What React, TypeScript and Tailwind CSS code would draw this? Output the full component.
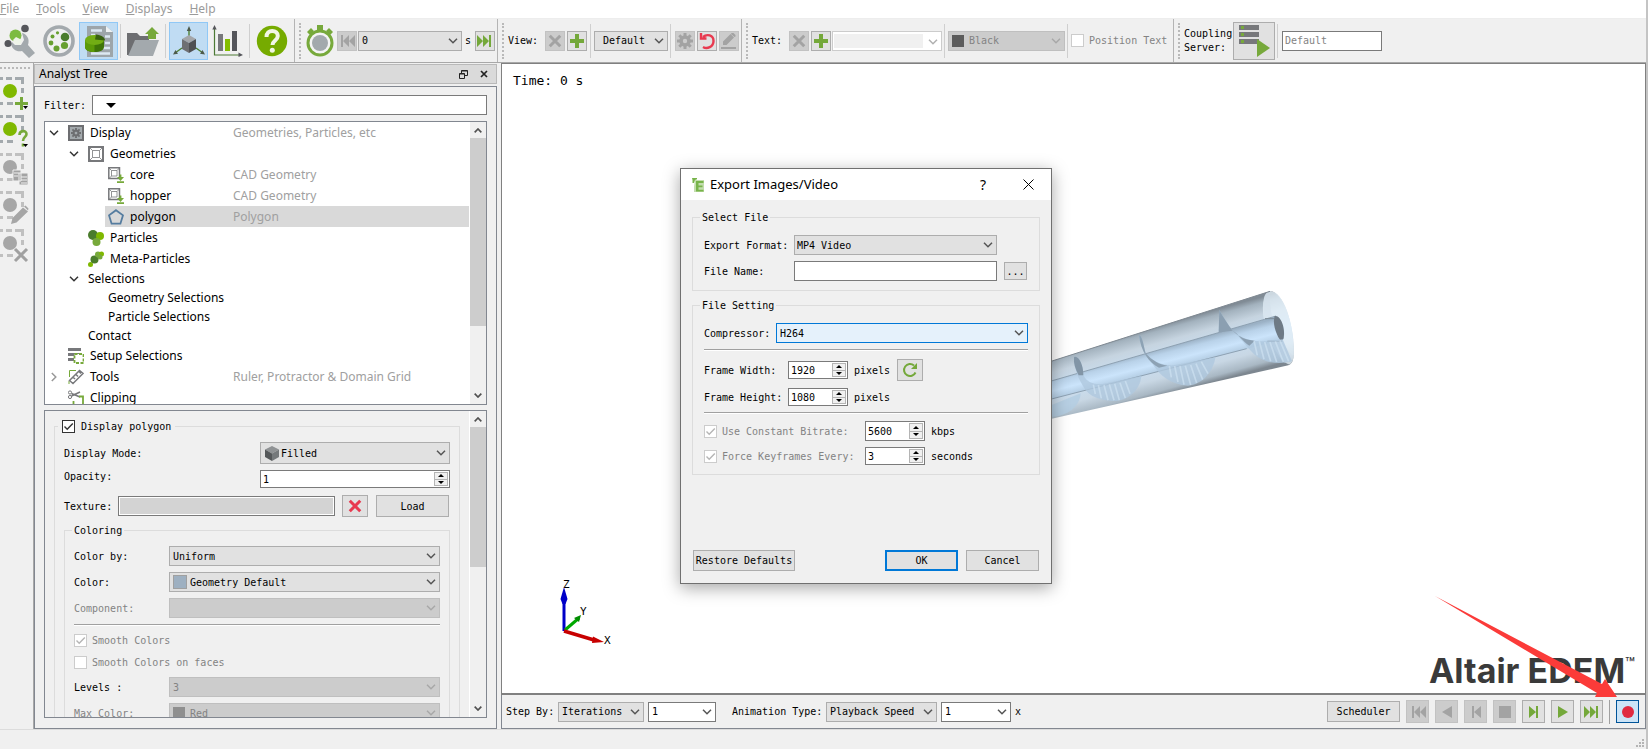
import type { ReactNode } from 'react';
import clsx from 'clsx';

/* ---------- small controls ---------- */

function Chevron({ className = '' }: { className?: string }) {
  return (
    <svg viewBox="0 0 10 6" className={clsx('h-1.5 w-2.5 fill-none stroke-current', className)} strokeWidth="1.5">
      <path d="M1 0.8 5 4.8 9 0.8" />
    </svg>
  );
}

type SelectProps = {
  label: string;
  value: string;
  className?: string;
  tone?: 'grey' | 'white' | 'active';
  disabled?: boolean;
  icon?: ReactNode;
};

function Select({ label, value, className, tone = 'grey', disabled, icon }: SelectProps) {
  return (
    <div className={clsx('relative h-5', className)}>
      <select
        aria-label={label}
        disabled={disabled}
        defaultValue={value}
        className={clsx(
          'block h-full w-full appearance-none border pr-4 outline-none disabled:opacity-100',
          icon ? 'pl-5' : 'pl-[3px]',
          disabled && 'border-[#bfbfbf] bg-[#cccccc] text-[#838383]',
          !disabled && tone === 'grey' && 'border-[#adadad] bg-[#e1e1e1]',
          !disabled && tone === 'white' && 'border-[#7a7a7a] bg-white',
          !disabled && tone === 'active' && 'border-[#0078d7] bg-[#e5f1fb]',
        )}
      >
        <option>{value}</option>
      </select>
      {icon && <span className="pointer-events-none absolute top-1/2 left-1 -translate-y-1/2">{icon}</span>}
      <Chevron
        className={clsx('pointer-events-none absolute top-1/2 right-1 -translate-y-1/2', disabled ? 'text-[#a8a8a8]' : 'text-[#555]')}
      />
    </div>
  );
}

function Spin({ id, value, className }: { id: string; value: string; className?: string }) {
  return (
    <div className={clsx('flex border border-[#7a7a7a] bg-white p-px', className)}>
      <input id={id} defaultValue={value} inputMode="numeric" className="w-0 flex-1 pl-px outline-none" />
      <div className="flex w-3.5 flex-col">
        <button aria-label="Increase" className="flex flex-1 items-center justify-center border border-[#b4b4b4] bg-[#f0f0f0]">
          <svg viewBox="0 0 6 3" className="h-[3px] w-1.5"><path d="M0 3 3 0 6 3z" /></svg>
        </button>
        <button aria-label="Decrease" className="flex flex-1 items-center justify-center border border-t-0 border-[#b4b4b4] bg-[#f0f0f0]">
          <svg viewBox="0 0 6 3" className="h-[3px] w-1.5"><path d="M0 0 3 3 6 0z" /></svg>
        </button>
      </div>
    </div>
  );
}

function Check({ label, checked, disabled, gap = 'gap-[5px]' }: { label: string; checked?: boolean; disabled?: boolean; gap?: string }) {
  return (
    <label className={clsx('flex items-center leading-[13px]', gap, disabled && 'text-[#838383]')}>
      <span className="relative size-[13px] shrink-0">
        <input
          type="checkbox"
          defaultChecked={checked}
          disabled={disabled}
          className="peer block size-[13px] appearance-none border border-[#333] bg-white disabled:border-[#cccccc]"
        />
        <svg
          viewBox="0 0 13 13"
          className="pointer-events-none absolute inset-0 hidden fill-none stroke-[#333] peer-checked:block peer-disabled:stroke-[#b5b5b5]"
          strokeWidth="1.4"
        >
          <path d="M2.5 6.5 5.2 9.2 10.8 3.4" />
        </svg>
      </span>
      {label}
    </label>
  );
}

function IconButton({ label, disabled, className, children }: { label: string; disabled?: boolean; className?: string; children: ReactNode }) {
  return (
    <button
      aria-label={label}
      disabled={disabled}
      className={clsx(
        'flex shrink-0 items-center justify-center border',
        disabled ? 'border-[#c2c2c2] bg-[#cccccc] text-[#a3a3a3]' : 'border-[#adadad] bg-[#e1e1e1] text-[#74a83a]',
        className,
      )}
    >
      {children}
    </button>
  );
}

function Rule({ className }: { className?: string }) {
  return <div className={clsx('h-0.5 border-t border-[#a0a0a0] bg-white', className)} />;
}

function Sep({ className }: { className?: string }) {
  return <div className={clsx('h-[34px] w-px shrink-0 bg-[#cfcfcf]', className)} />;
}

function Grip({ className }: { className?: string }) {
  return <div className={clsx('h-9 shrink-0 border-l-2 border-dotted border-[#b9b9b9]', className)} />;
}

function ScrollBar({ thumb }: { thumb: string }) {
  return (
    <div className="flex w-4 shrink-0 flex-col items-center bg-[#f0f0f0] text-[#505050]">
      <Chevron className="mt-1.5 mb-[5px] h-[5px] shrink-0 rotate-180 stroke-2" />
      <div className={clsx('w-full bg-[#cdcdcd]', thumb)} />
      <Chevron className="mt-auto mb-1.5 h-[5px] shrink-0 stroke-2" />
    </div>
  );
}

/* ---------- icons ---------- */

const CrossIcon = ({ className = 'size-4' }: { className?: string }) => (
  <svg viewBox="0 0 16 16" className={clsx('fill-none stroke-current', className)} strokeWidth="3.4">
    <path d="M2 2 14 14M14 2 2 14" />
  </svg>
);

const PlusIcon = () => (
  <svg viewBox="0 0 14 14" className="size-3.5 fill-current">
    <path d="M5 0h4v5h5v4H9v5H5V9H0V5h5z" />
  </svg>
);

const WrenchIcon = () => (
  <svg viewBox="0 0 32 34" className="h-[34px] w-8 shrink-0">
    <circle cx="11.500" cy="11.500" r="6" fill="#7dbb42" />
    <path d="M7 20c1 5 6 8.500 11 7l7 7 6-5-7-8c2-6-1-11-6-12l2 7-3 5-6 0-3-3z" fill="#a3a9ad" />
    <path d="M12 13l6 3-2 5-5-1-2-4z" fill="#eef4e8" />
    <circle cx="21" cy="4.500" r="3.800" fill="#55565b" />
    <circle cx="4" cy="19.500" r="3.500" fill="#55565b" />
  </svg>
);

const PaletteIcon = () => (
  <svg viewBox="0 0 32 32" className="size-8 shrink-0">
    <circle cx="16" cy="16" r="14" fill="#f0f0f0" stroke="#a3a9ad" strokeWidth="3.6" />
    <circle cx="22" cy="12" r="4.3" fill="#4a7c2c" />
    <circle cx="21.5" cy="20.5" r="3.6" fill="#68a030" />
    <circle cx="13.5" cy="23.5" r="3" fill="#68a030" />
    <circle cx="8" cy="18" r="2.4" fill="#68a030" />
    <circle cx="9.5" cy="11.5" r="2" fill="#68a030" />
    <circle cx="14.5" cy="7.8" r="1.6" fill="#68a030" />
  </svg>
);

const AnalystIcon = () => (
  <svg viewBox="0 0 32 34" className="h-[34px] w-8">
    <path d="M4 2h19l7 6v25H4z" fill="#9da5aa" />
    <path d="M23 2v6h7z" fill="#eef1f3" />
    <path d="M8 6.500h11M8 11h4M22 12.500h5M22 19h5M20 24h7M8 29.500h19" stroke="#dce8f2" strokeWidth="2.600" />
    <path d="M2 16v7c0 3 4 5 9.500 5s9.500-2 9.500-5v-7z" fill="#3f7508" />
    <path d="M2 16v7c0 3 4 5 9.500 5v-7z" fill="#5c9a08" />
    <ellipse cx="11.500" cy="16" rx="9.500" ry="5" fill="#72ad14" />
    <path d="M12 15.500 13 10.500C18 11 22 13 22 16.500z" fill="#38610f" />
  </svg>
);

const FolderIcon = () => (
  <svg viewBox="0 0 32 32" className="size-8 shrink-0">
    <path d="M0 8h10l3 3h9v5L2 30H0z" fill="#6d6e71" />
    <path d="M8 15h24l-6 16H1z" fill="#a3a9ad" />
    <path d="M21 14V9h-3l7-7 7 7h-3v5z" fill="#77a93b" />
  </svg>
);

const AxesIcon = () => (
  <svg viewBox="0 0 32 32" className="size-8">
    <path d="M16 14V4M9 23 2 28M23 23l7 5" stroke="#4e7f33" strokeWidth="1.4" />
    <path d="M16 1l2.200 5h-4.400zM0 29.500l5-.8-2.500-3.700zM32 29.500l-5-.8 2.500-3.700z" fill="#4d5a4a" />
    <path d="M16 10l7 4-7 4-7-4z" fill="#a4a6a9" />
    <path d="M9 14l7 4v10l-7-4z" fill="#6f7073" />
    <path d="M23 14l-7 4v10l7-4z" fill="#4f5053" />
  </svg>
);

const ChartIcon = () => (
  <svg viewBox="0 0 32 32" className="size-8 shrink-0">
    <path d="M2.500 3v27H28" fill="none" stroke="#4c7a35" strokeWidth="1.200" />
    <path d="M2.500 0l2.200 4.500H.3zM31 30l-4.500 2v-4.500z" fill="#55565b" />
    <path d="M6 9h5v17H6z" fill="#77787b" />
    <path d="M13 14h5v12h-5z" fill="#84bd00" />
    <path d="M20 6h5v20h-5z" fill="#55565b" />
  </svg>
);

const HelpIcon = () => (
  <svg viewBox="0 0 32 32" className="size-8 shrink-0">
    <circle cx="16" cy="16" r="15.200" fill="#76ab00" />
    <path d="M10.500 12c0-4 2.500-6 5.700-6s5.600 2 5.600 5c0 4.500-5.300 4.500-5.300 9" fill="none" stroke="#f2f6e6" strokeWidth="4" />
    <circle cx="16.300" cy="25.300" r="2.500" fill="#f2f6e6" />
  </svg>
);

const StopwatchIcon = () => (
  <svg viewBox="0 0 30 34" className="h-[34px] w-[30px] shrink-0">
    <path d="M12 1h6v5h-6zM2 8l4-4 3 3-4 4zM28 8l-4-4-3 3 4 4z" fill="#77a93b" />
    <circle cx="15" cy="19" r="12" fill="#f4f4f4" stroke="#77a93b" strokeWidth="3" />
    <circle cx="15" cy="19" r="8" fill="#a3a9ad" />
  </svg>
);

const GearIcon = ({ className = 'size-4' }: { className?: string }) => (
  <svg viewBox="0 0 16 16" className={className}>
    <circle cx="8" cy="8" r="4" fill="none" stroke="currentColor" strokeWidth="3.600" />
    <path d="M8 0v3M8 13v3M0 8h3M13 8h3M2.300 2.300l2.200 2.200M11.500 11.500l2.200 2.200M13.700 2.300l-2.200 2.200M4.500 11.500l-2.200 2.200" stroke="currentColor" strokeWidth="3" />
  </svg>
);

const UndoIcon = () => (
  <svg viewBox="0 0 18 18" className="size-[18px] fill-none stroke-[#e8394f]" strokeWidth="2.400">
    <path d="M5 15c4 2.500 10.500 0 10.500-6S9 1.500 5 5M3 1v5.500h5.500" />
  </svg>
);

const PenIcon = () => (
  <svg viewBox="0 0 16 16" className="size-4 fill-current">
    <path d="M2 8.500 9.500 1l3.500 3.500L5.500 12H2zM0 14h15v2H0zM10.500 0h2l2 2v1.500l-1 .5L10 1z" />
  </svg>
);

const ServerIcon = () => (
  <svg viewBox="0 0 34 34" className="size-[34px]">
    <path d="M2 1h20v5H2zM2 8h20v5H2zM2 15h20v5H2z" fill="#77787b" />
    <path d="M4 2h3v3H4zM4 9h3v3H4zM4 16h3v3H4z" fill="#77a93b" />
    <path d="M20 15v18l13-9z" fill="#77a93b" />
  </svg>
);

const CubeIcon = () => (
  <svg viewBox="0 0 16 16" className="size-4">
    <path d="M8 1l7 3.500-7 4L1 4.500z" fill="#8f9294" />
    <path d="M1 4.500l7 4V16l-7-4z" fill="#55585a" />
    <path d="M15 4.500l-7 4V16l7-4z" fill="#75797b" />
  </svg>
);

const skipBack = 'M2 1h2v12H2zM10 1v12L4 7zM16 1v12l-6-6z';
const skipForward = 'M14 1h-2v12h2zM6 1v12l6-6zM0 1v12l6-6z';

const Glyph = ({ d }: { d: string }) => (
  <svg viewBox="0 0 16 14" className="h-3.5 w-4 fill-current">
    <path d={d} />
  </svg>
);

/* selection tools down the left edge */
function SelectionTool({ label, disabled, badge, menu }: { label: string; disabled?: boolean; badge: ReactNode; menu?: boolean }) {
  return (
    <button aria-label={label} disabled={disabled} className="block h-[38px]">
      <svg viewBox="0 0 30 38" className="h-[38px] w-[30px]">
        <g fill="none" stroke={disabled ? '#c0c0c0' : '#a3a9ad'} strokeWidth="3">
          <path d="M0 1.500h3M6 1.500h6M15 1.500h9M22.500 2v5M22.500 11v5M0 26.500h3M7 26.500h6" />
        </g>
        <circle cx="10" cy="14" r="7" fill={disabled ? '#a6a6a6' : '#80b800'} />
        {badge}
        {menu && <path d="M23 29h5l-2.500 3z" fill="#000" />}
      </svg>
    </button>
  );
}

const treeIcons: Record<string, ReactNode> = {
  display: (
    <span className="grid size-4 place-items-center border-2 border-[#6d6e71] bg-[#a3a9ad] text-[#6d6e71]">
      <GearIcon className="size-2.5" />
    </span>
  ),
  geometries: (
    <svg viewBox="0 0 16 16" className="size-4 fill-none stroke-[#77787b]">
      <path d="M1 1h14v14H1z" strokeWidth="2" />
      <path d="M4.500 4.500h7v7h-7zM1 1l3.500 3.500M15 1l-3.500 3.500M1 15l3.500-3.500M15 15l-3.500-3.500" strokeWidth=".8" />
    </svg>
  ),
  cad: (
    <svg viewBox="0 0 16 16" className="size-4 fill-none stroke-[#77787b]">
      <path d="M.8.8h10.700v10.700H.8z" strokeWidth="1.500" />
      <path d="M3.500 3.500h5.500v5.500H3.500zM1 1l2.500 2.500M11.500 1 9 3.500M1 11.500l2.500-2.500" strokeWidth=".8" />
      <path d="M12.500 7.500v4M9 15.200h7" stroke="#77a93b" strokeWidth="1.800" />
      <path d="M9 10h7l-3.500 4z" fill="#77a93b" stroke="none" />
    </svg>
  ),
  polygon: (
    <svg viewBox="0 0 16 16" className="size-4 fill-none stroke-[#557c9f]" strokeWidth="1.800">
      <path d="M8 1.200 15 6.300 12.400 14.700H3.600L1 6.300z" />
    </svg>
  ),
  particles: (
    <svg viewBox="0 0 16 16" className="size-4">
      <circle cx="5" cy="5" r="5" fill="#4a7c2c" />
      <circle cx="12" cy="6" r="4" fill="#7fb800" />
      <circle cx="8.500" cy="12" r="4" fill="#77a93b" />
    </svg>
  ),
  meta: (
    <svg viewBox="0 0 16 16" className="size-4">
      <circle cx="2.500" cy="13.500" r="2.500" fill="#7fb800" />
      <circle cx="6.500" cy="8.500" r="4" fill="#4a7c2c" />
      <circle cx="10" cy="3.500" r="3" fill="#77a93b" />
      <circle cx="13.500" cy="3" r="2.500" fill="#7fb800" />
      <circle cx="12" cy="6" r="2.500" fill="#77a93b" />
    </svg>
  ),
  setup: (
    <svg viewBox="0 0 16 16" className="size-4">
      <path d="M0 0h13v3H0zM0 5h13v3H0zM0 10h6v3H0z" fill="#77787b" />
      <path d="M6.500 6h9v9h-9z" fill="#fff" stroke="#77a93b" strokeWidth="1.800" strokeDasharray="3 1.500" />
    </svg>
  ),
  tools: (
    <svg viewBox="0 0 16 16" className="size-4 fill-none">
      <path d="M1.500 8V1.500H8M1 15v-3" stroke="#77a93b" />
      <path d="M1.500 11.500 11.500 1.500l3.500 3L5 14.500zM5 8l2 2M8 5.500l2 2M11 2.500l2 2" stroke="#77787b" strokeWidth="1.500" />
    </svg>
  ),
  clipping: (
    <svg viewBox="0 0 16 16" className="size-4 fill-none">
      <circle cx="2" cy="2.500" r="1.600" stroke="#77787b" />
      <circle cx="2" cy="7" r="1.600" stroke="#77787b" />
      <path d="M3.500 3.500 12 7M3.500 6 12 2" stroke="#77787b" strokeWidth="1.500" />
      <path d="M5.500 16v-5M11 6.500h4V16" stroke="#77a93b" strokeWidth="1.800" />
    </svg>
  ),
};

/* ---------- menu and toolbars ---------- */

function MenuBar() {
  const menus = ['File', 'Tools', 'View', 'Displays', 'Help'];
  return (
    <nav className="flex h-[19px] gap-[17px] border-b border-[#ededed] bg-white font-['Noto_Sans',sans-serif] text-xs leading-4 text-[#9a9a9a]">
      {menus.map((m) => (
        <button key={m}>
          <span className="underline">{m[0]}</span>
          {m.slice(1)}
        </button>
      ))}
    </nav>
  );
}

function Toolbars() {
  return (
    <div className="flex h-11 items-stretch border-b border-[#a8a8a8]">
      <div className="flex w-[295px] items-center border-r border-[#b4b4b4] pl-1">
        <button aria-label="Creator"><WrenchIcon /></button>
        <button aria-label="Simulator" className="ml-[7px]"><PaletteIcon /></button>
        <button aria-label="Analyst" className="ml-1 flex h-[38px] w-[39px] items-center justify-center border border-[#90c8f6] bg-[#c0dcf3]"><AnalystIcon /></button>
        <Sep className="ml-0.5" />
        <button aria-label="Open" className="ml-1.5"><FolderIcon /></button>
        <Sep className="ml-1.5" />
        <button aria-label="Viewer" className="ml-[3px] flex h-[38px] w-[39px] items-center justify-center border border-[#90c8f6] bg-[#c0dcf3]"><AxesIcon /></button>
        <button aria-label="Graphs" className="ml-1"><ChartIcon /></button>
        <Sep className="ml-[5px]" />
        <button aria-label="Help" className="ml-1.5"><HelpIcon /></button>
      </div>

      <div className="flex w-[203px] items-center border-r border-[#b4b4b4] pl-1">
        <Grip />
        <span className="ml-1"><StopwatchIcon /></span>
        <IconButton label="First time step" disabled className="ml-0.5 size-5"><Glyph d={skipBack} /></IconButton>
        <Select label="Time" value="0" className="ml-px w-[104px]" />
        <span className="ml-[3px]">s</span>
        <IconButton label="Last time step" className="ml-1 size-5"><Glyph d={skipForward} /></IconButton>
      </div>

      <div className="flex w-[244px] items-center border-r border-[#b4b4b4] pl-1">
        <Grip />
        <span className="ml-1 w-[37px]">View:</span>
        <IconButton label="Delete view" disabled className="size-5"><CrossIcon className="size-3.5" /></IconButton>
        <IconButton label="Add view" className="ml-0.5 size-5"><PlusIcon /></IconButton>
        <Sep className="ml-[3px]" />
        <Select label="View" value=" Default" className="ml-[3px] w-[74px] [&>select]:pl-2" />
        <Sep className="ml-0.5" />
        <IconButton label="View settings" disabled className="ml-1 size-5"><GearIcon /></IconButton>
        <IconButton label="Reset view" className="ml-0.5 size-5"><UndoIcon /></IconButton>
        <IconButton label="Rename view" disabled className="ml-0.5 size-5"><PenIcon /></IconButton>
      </div>

      <div className="flex w-[432px] items-center border-r border-[#b4b4b4] pl-1">
        <Grip />
        <span className="ml-1 w-[37px]">Text:</span>
        <IconButton label="Delete text" disabled className="size-5"><CrossIcon className="size-3.5" /></IconButton>
        <IconButton label="Add text" className="ml-0.5 size-5"><PlusIcon /></IconButton>
        <div className="relative ml-px h-5 w-[110px]">
          <select aria-label="Text" disabled className="block h-full w-full appearance-none border border-[#cccccc] bg-white opacity-100" />
          <span className="pointer-events-none absolute inset-y-[3px] left-0.5 w-[89px] bg-[#f0f0f0]" />
          <Chevron className="pointer-events-none absolute top-2 right-1 text-[#b0b0b0]" />
        </div>
        <Sep className="ml-0.5" />
        <Select label="Text colour" value="Black" disabled className="ml-[3px] w-[117px]" icon={<i className="block size-3 bg-[#5c5c5c]" />} />
        <Sep className="ml-0.5" />
        <span className="ml-[3px]"><Check label="Position Text" disabled /></span>
      </div>

      <div className="flex flex-1 items-center pl-1">
        <Grip />
        <label htmlFor="server" className="ml-1 w-[49px] leading-[14px]">Coupling Server:</label>
        <IconButton label="Start coupling server" className="h-[38px] w-[42px]"><ServerIcon /></IconButton>
        <Sep className="ml-0.5" />
        <input id="server" defaultValue="Default" className="ml-1 h-5 w-[100px] border border-[#7a7a7a] bg-white pl-0.5 text-[#838383] outline-none" />
      </div>
    </div>
  );
}

function SelectionBar() {
  return (
    <aside className="w-[34px] shrink-0 border-r border-[#a8a8a8] pt-1">
      <div className="mb-2 w-[30px] border-t-2 border-dotted border-[#b9b9b9]" />
      <SelectionTool label="Add selection" menu badge={<path d="M20 20h3v5h5v3h-5v5h-3v-5h-5v-3h5z" fill="#77a93b" />} />
      <SelectionTool
        label="Query selection"
        menu
        badge={<path d="M19.500 20c0-5 7-5 7-1 0 3-3.500 3-3.500 7M23 28.500v3" fill="none" stroke="#77a93b" strokeWidth="2.600" />}
      />
      <SelectionTool
        label="Copy selection"
        disabled
        badge={
          <g stroke="#f0f0f0">
            <path d="M13 17h8v11h-8zM19 20h9v12h-9z" fill="#a3a3a3" />
            <path d="M14 20h5M14 23h4M21 24h6M21 27h6M21 30h6" />
          </g>
        }
      />
      <SelectionTool label="Edit selection" disabled badge={<path d="M11 33l1.500-6L23 16.500l5 4-11.500 11zM24 15.500l1.500-1 3 3-.5 2z" fill="#a6a6a6" />} />
      <SelectionTool label="Delete selection" disabled badge={<path d="M15 20 27 32M27 20 15 32" stroke="#a0a0a0" strokeWidth="3" />} />
    </aside>
  );
}

/* ---------- analyst tree ---------- */

type Node = { name: string; level: 0 | 1 | 2; icon?: string; note?: string; open?: boolean; closed?: boolean; selected?: boolean };

const nodes: Node[] = [
  { name: 'Display', level: 0, icon: 'display', note: 'Geometries, Particles, etc', open: true },
  { name: 'Geometries', level: 1, icon: 'geometries', open: true },
  { name: 'core', level: 2, icon: 'cad', note: 'CAD Geometry' },
  { name: 'hopper', level: 2, icon: 'cad', note: 'CAD Geometry' },
  { name: 'polygon', level: 2, icon: 'polygon', note: 'Polygon', selected: true },
  { name: 'Particles', level: 1, icon: 'particles' },
  { name: 'Meta-Particles', level: 1, icon: 'meta' },
  { name: 'Selections', level: 1, open: true },
  { name: 'Geometry Selections', level: 2 },
  { name: 'Particle Selections', level: 2 },
  { name: 'Contact', level: 1 },
  { name: 'Setup Selections', level: 0, icon: 'setup' },
  { name: 'Tools', level: 0, icon: 'tools', note: 'Ruler, Protractor & Domain Grid', closed: true },
  { name: 'Clipping', level: 0, icon: 'clipping' },
];

const arrowCell = ['w-5', 'w-10', 'w-15'];
const nameCell = ['w-[168px]', 'w-[148px]', 'w-[128px]'];

function Tree() {
  return (
    <div className="mt-1.5 flex h-[284px] shrink-0 border border-[#828790] bg-white font-['Noto_Sans',sans-serif] text-xs">
      <div role="tree" className="min-w-0 flex-1 overflow-hidden pr-px">
        {nodes.map((n) => (
          <div role="treeitem" key={n.name} className={clsx('flex', n.icon ? 'h-[21px]' : 'h-[19px]')}>
            <span className={clsx('flex shrink-0 items-center justify-end pr-1.5', arrowCell[n.level])}>
              {n.open && <Chevron className="text-[#333]" />}
              {n.closed && <Chevron className="-rotate-90 text-[#999]" />}
            </span>
            <div className={clsx('flex min-w-0 flex-1 items-center whitespace-nowrap', n.selected && 'bg-[#d9d9d9]')}>
              <span className={clsx('flex shrink-0 items-center gap-1.5 pl-[3px]', nameCell[n.level])}>
                {n.icon && treeIcons[n.icon]}
                {n.name}
              </span>
              <span className="text-[#a0a0a0]">{n.note}</span>
            </div>
          </div>
        ))}
      </div>
      <ScrollBar thumb="h-[188px]" />
    </div>
  );
}

function Properties() {
  return (
    <div className="mt-[5px] flex min-h-0 flex-1 border border-[#828790]">
      <div className="min-w-0 flex-1 overflow-hidden border-r border-white px-[9px] pt-2">
        <fieldset className="h-[400px] border border-[#dcdcdc] px-[9px] pt-2">
          <legend className="-ml-1.5 h-[15px] px-1 pt-px">
            <Check label="Display polygon" checked gap="gap-1.5" />
          </legend>
          <div className="flex items-center justify-between">
            <span>Display Mode:</span>
            <Select label="Display mode" value="Filled" className="h-[22px] w-[190px]" icon={<CubeIcon />} />
          </div>
          <div className="mt-1.5 flex justify-between">
            <label htmlFor="opacity" className="leading-[13px]">Opacity:</label>
            <Spin id="opacity" value="1" className="h-[18px] w-[190px]" />
          </div>
          <div className="mt-[7px] flex items-center pr-px">
            <label htmlFor="texture" className="w-[54px]">Texture:</label>
            <input id="texture" readOnly className="h-5 w-0 flex-1 border border-[#7a7a7a] bg-[#d3d3d3] ring-1 ring-white ring-inset" />
            <IconButton label="Clear texture" className="ml-[7px] h-[22px] w-[26px]"><CrossIcon className="size-3.5 text-[#e8394f]" /></IconButton>
            <button className="ml-2 h-[22px] w-[73px] border border-[#adadad] bg-[#e1e1e1]">Load</button>
          </div>
          <fieldset className="mt-1.5 h-[300px] border border-[#dcdcdc] px-[9px] pt-2">
            <legend className="-ml-0.5 px-0.5 leading-[15px]">Coloring</legend>
            <div className="grid grid-cols-[95px_1fr] items-center gap-y-1.5">
              <span>Color by:</span>
              <Select label="Color by" value="Uniform" />
              <span>Color:</span>
              <Select label="Color" value="Geometry Default" icon={<i className="block size-3.5 border border-[#a0a0a0] bg-[#9eb0c1]" />} />
              <span className="text-[#838383]">Component:</span>
              <Select label="Component" value="" disabled />
            </div>
            <Rule className="mt-1.5" />
            <div className="mt-2 flex flex-col gap-[9px]">
              <Check label="Smooth Colors" checked disabled />
              <Check label="Smooth Colors on faces" disabled />
            </div>
            <div className="mt-2 grid grid-cols-[95px_1fr] items-center gap-y-1.5">
              <span>Levels :</span>
              <Select label="Levels" value="3" disabled />
              <span className="text-[#838383]">Max Color:</span>
              <Select label="Max color" value="Red" disabled icon={<i className="block size-3 bg-[#8f8f8f]" />} />
            </div>
          </fieldset>
        </fieldset>
      </div>
      <ScrollBar thumb="h-[140px]" />
    </div>
  );
}

function AnalystPanel() {
  return (
    <section className="flex w-[463px] shrink-0 flex-col pt-px">
      <header className="flex h-5 items-center border border-[#b9b9b9] bg-[#dadada] pr-2 pl-1 font-['Noto_Sans',sans-serif] text-xs">
        <h2>Analyst Tree</h2>
        <button aria-label="Float panel" className="ml-auto">
          <svg viewBox="0 0 9 9" className="size-[9px] fill-none stroke-[#222]">
            <path d="M.5 3.500h5v5h-5zM.5 4h5M2.500 3V.5h6v5H6M2.500 1h6" />
          </svg>
        </button>
        <button aria-label="Close panel" className="ml-3"><CrossIcon className="size-2 text-[#222]" /></button>
      </header>
      <div className="mt-0.5 flex min-h-0 flex-1 flex-col border border-[#828790] px-[9px] pt-2 pb-2.5">
        <div className="flex items-center">
          <label htmlFor="filter" className="w-12">Filter:</label>
          <div className="flex h-5 flex-1 items-center border border-[#7a7a7a] bg-white pl-[13px]">
            <svg viewBox="0 0 10 5" className="h-[5px] w-2.5"><path d="M0 0h10L5 5z" /></svg>
            <input id="filter" className="ml-2 w-0 flex-1 outline-none" />
          </div>
        </div>
        <Tree />
        <Properties />
      </div>
    </section>
  );
}

/* ---------- 3D view ---------- */

function Conveyor() {
  return (
    <svg viewBox="0 45 810 405" className="absolute top-[221px] left-[528px] h-[135px] w-[270px]">
      <defs>
        <linearGradient id="shell" gradientUnits="userSpaceOnUse" x1="370" y1="170" x2="425" y2="370">
          <stop offset="0" stopColor="#808b95" />
          <stop offset="0.08" stopColor="#a3b2be" />
          <stop offset="0.25" stopColor="#c6d4e0" />
          <stop offset="0.5" stopColor="#cadff2" />
          <stop offset="0.75" stopColor="#c8d7e4" />
          <stop offset="0.92" stopColor="#a9b8c4" />
          <stop offset="1" stopColor="#7d8790" />
        </linearGradient>
        <linearGradient id="shaft" gradientUnits="userSpaceOnUse" x1="390" y1="235" x2="408" y2="305">
          <stop offset="0" stopColor="#9bb1c5" />
          <stop offset="0.25" stopColor="#b9d2e9" />
          <stop offset="0.6" stopColor="#cbe4fb" />
          <stop offset="1" stopColor="#aec7dd" />
        </linearGradient>
      </defs>
      <path d="M-40 307 720 64C760 62 795 170 791 255 790 272 785 283 775 286L-40 470z" fill="url(#shell)" />
      <path d="M720 64C765 62 795 180 791 255 790 272 785 283 775 283 735 265 685 150 702 85 705 72 712 64 720 64z" fill="#e6f1fa" opacity="0.75" />
      <path d="M702 85c-10 60 20 150 62 195l27-20C750 220 715 150 720 64c-10 2-15 8-18 21z" fill="#cfdce8" opacity="0.4" />
      <path d="M-40 363 738 138c20 10 30 50 22 70L-40 414z" fill="url(#shaft)" />
      <path d="M-40 363 738 138M-40 414 650 236" fill="none" stroke="#8497a8" strokeWidth="2.500" />
      {/* shaft end */}
      <path d="M734 138c20-3 33 40 27 66-2 8-8 10-12 4-12-18-22-50-15-70z" fill="#6e7a85" />
      <path d="M705 146h28M712 214h45" stroke="#7c8a96" strokeWidth="3" />
      {/* blades */}
      <path d="M65 405 152 370C150 410 110 440 65 440z" fill="#b3cde2" opacity="0.8" />
      <path d="M132 262c12-8 28 20 28 54 12 24 35 28 58 26l116-24c-4 45-45 78-88 75-50-3-75-20-90-50-12-20-24-50-24-81z" fill="#afc8de" opacity="0.8" />
      <path d="M132 262c12-8 28 20 28 54l-14 0c-10-18-16-36-14-54z" fill="#8295a6" />
      <path d="M327 195c10 0 12 30 20 55 20 22 45 38 85 36l124-24c-6 45-40 82-82 85-50-2-86-30-108-68-22-24-35-50-39-84z" fill="#afc8de" opacity="0.8" />
      <path d="M327 195c10 0 14 34 20 55 20 22 40 34 65 37l-25 6c-30-14-55-50-60-98z" fill="#8da2b4" />
      <path d="M568 120c12 22 25 42 40 62 25 25 60 32 100 32l50-6 28 66c-40 10-80 6-112-20-30-30-50-60-66-72h-42z" fill="#afc8de" opacity="0.8" />
      <path d="M568 120c12 22 25 42 40 62 20 20 40 27 66 30l-16 15c-20-12-34-38-50-45l-42 5z" fill="#8b9fb1" />
      <g stroke="#d3e6f5" strokeWidth="5" opacity="0.6">
        <path d="M190 344l6 28M205 345l9 40M222 345l12 46M238 343l14 48M254 341l14 50M270 338l16 46M286 333l14 38" />
        <path d="M418 288l6 34M434 288l10 48M450 288l12 56M466 287l16 58M482 285l18 54M498 281l20 48M514 275l20 36" />
        <path d="M672 212l10 44M688 214l14 54M704 216l18 58M720 216l20 60M736 214l24 62M750 212l26 62" />
      </g>
      <path d="M-40 307 720 64" fill="none" stroke="#7f8992" strokeWidth="3" />
    </svg>
  );
}

function Triad() {
  return (
    <svg viewBox="0 0 58 72" className="absolute bottom-[42px] left-[51px] h-[72px] w-[58px] font-['DejaVu_Sans_Mono',monospace] text-[11px]">
      <path d="M11 52V20" stroke="#0000c8" strokeWidth="3" />
      <path d="M11 8l3.500 12-2 5h-3l-2-5z" fill="#0000c8" />
      <path d="M12 51 26 39" stroke="#00a800" strokeWidth="3" />
      <path d="M21 39l7-3-2 7z" fill="#008c00" />
      <path d="M11 52l30 9" stroke="#c80000" strokeWidth="3.500" />
      <path d="M40 57.500 51 63l-12 1z" fill="#c80000" />
      <text x="10" y="9">Z</text>
      <text x="27" y="36">Y</text>
      <text x="51" y="65">X</text>
    </svg>
  );
}

function Viewport() {
  return (
    <div className="relative min-h-0 flex-1 border border-b-2 border-[#808080] bg-white">
      <p className="px-[11px] pt-2 text-[13px] leading-[18px]">Time: 0 s</p>
      <Conveyor />
      <Triad />
      <div className="absolute right-2.5 bottom-0.5 flex items-start font-['Inter',sans-serif] text-[#3a3a3a]">
        <span className="text-[34px] leading-10 font-bold">Altair EDEM</span>
        <span className="pt-1 text-base leading-4 font-medium">™</span>
      </div>
      <svg viewBox="0 0 182 101" className="absolute right-7 -bottom-1 z-20 h-[101px] w-[182px]">
        <path d="M0 0 167 88 170 83 182 101H160l2-4z" fill="#fb3b39" />
      </svg>
    </div>
  );
}

function PlaybackBar() {
  return (
    <div className="flex h-[34px] shrink-0 items-center border border-t-0 border-[#828790] pr-1.5 pl-1">
      <span className="w-[52px]">Step By:</span>
      <Select label="Step by" value="Iterations" className="w-[86px]" />
      <Select label="Step size" value="1" tone="white" className="ml-1 w-[68px]" />
      <span className="ml-4 w-[94px]">Animation Type:</span>
      <Select label="Animation type" value="Playback Speed" className="w-[111px]" />
      <Select label="Speed" value="1" tone="white" className="ml-1 w-[70px]" />
      <span className="ml-1">x</span>

      <button className="mr-1.5 ml-auto h-[21px] w-[73px] border border-[#adadad] bg-[#e1e1e1]">Scheduler</button>
      <div className="flex gap-1.5">
        <IconButton label="First" disabled className="size-[23px]"><Glyph d={skipBack} /></IconButton>
        <IconButton label="Play backwards" disabled className="size-[23px]"><Glyph d="M13 1v12L3 7z" /></IconButton>
        <IconButton label="Step back" disabled className="size-[23px]"><Glyph d="M4 1h2v12H4zM13 1v12L6 7z" /></IconButton>
        <IconButton label="Stop" disabled className="size-[23px]"><Glyph d="M2 1h12v12H2z" /></IconButton>
        <IconButton label="Step forward" className="size-[23px]"><Glyph d="M3 1v12l7-6zM10 1h2v12h-2z" /></IconButton>
        <IconButton label="Play" className="size-[23px]"><Glyph d="M3 1v12l10-6z" /></IconButton>
        <IconButton label="Last" className="size-[23px]"><Glyph d={skipForward} /></IconButton>
      </div>
      <div className="mx-1.5 h-6 w-px bg-[#a0a0a0]" />
      <button aria-label="Record" className="flex size-[23px] items-center justify-center border border-[#005499] bg-[#cce4f7]">
        <span className="size-3 rounded-full bg-[#e02a40]" />
      </button>
    </div>
  );
}

/* ---------- export dialog ---------- */

function ExportDialog() {
  return (
    <div role="dialog" aria-label="Export Images/Video" className="absolute top-[168px] left-[680px] z-10 flex h-[416px] w-[372px] flex-col border border-[#707070] bg-[#f0f0f0] shadow-[0_4px_16px_rgba(0,0,0,0.35)]">
      <header className="flex h-[31px] items-center bg-white pr-[17px] pl-2.5 font-['Noto_Sans',sans-serif] text-xs">
        <svg viewBox="0 0 13 14" className="h-3.5 w-[13px] fill-[#77b34a]">
          <path d="M4 2h9v12H3V8.500z" opacity="0.45" />
          <path d="M5 3h7.500v2H7.500v2.500h4v1.800h-4v2.500h5v1.700H5zM1 0h5v1.300L4 2 3 5H1.500V2z" />
        </svg>
        <h2 className="ml-1.5 text-[13px]">Export Images/Video</h2>
        <button aria-label="Help" className="ml-auto text-sm">?</button>
        <button aria-label="Close" className="ml-[37px]">
          <svg viewBox="0 0 11 11" className="size-[11px] stroke-black"><path d="M.5.5l10 10M10.500.5l-10 10" /></svg>
        </button>
      </header>

      <div className="flex flex-1 flex-col px-[11px] pt-2.5 pb-3">
        <fieldset className="border border-[#dcdcdc] px-[11px] pt-2.5 pb-[9px]">
          <legend className="-ml-1 px-0.5 leading-[15px]">Select File</legend>
          <div className="flex items-center">
            <span className="w-[90px]">Export Format:</span>
            <Select label="Export format" value="MP4 Video" className="w-[203px] [&>select]:pl-0.5" />
          </div>
          <div className="mt-1.5 flex items-center">
            <label htmlFor="file-name" className="w-[90px]">File Name:</label>
            <input id="file-name" className="h-5 w-[203px] border border-[#7a7a7a] bg-white px-0.5 outline-none" />
            <button aria-label="Browse" className="ml-[7px] h-[18px] w-[23px] border border-[#adadad] bg-[#e1e1e1]">...</button>
          </div>
        </fieldset>

        <fieldset className="mt-[7px] border border-[#dcdcdc] px-[11px] pt-2.5 pb-[9px]">
          <legend className="-ml-1 px-0.5 leading-[15px]">File Setting</legend>
          <div className="flex items-center">
            <span className="w-[72px]">Compressor:</span>
            <Select label="Compressor" value="H264" tone="active" className="flex-1" />
          </div>
          <Rule className="mt-1.5" />
          <div className="mt-2 flex items-center">
            <label htmlFor="frame-width" className="w-21">Frame Width:</label>
            <Spin id="frame-width" value="1920" className="h-[18px] w-[60px]" />
            <span className="ml-1.5 w-[43px]">pixels</span>
            <IconButton label="Reset size" className="h-[22px] w-[26px]">
              <svg viewBox="0 0 16 16" className="size-4 fill-none stroke-current" strokeWidth="2">
                <path d="M13.500 10.500A6 6 0 1 1 12 3.500" />
                <path d="M15 1v6H9z" fill="currentColor" stroke="none" />
              </svg>
            </IconButton>
          </div>
          <div className="mt-[7px] flex items-center">
            <label htmlFor="frame-height" className="w-21">Frame Height:</label>
            <Spin id="frame-height" value="1080" className="h-[18px] w-[60px]" />
            <span className="ml-1.5">pixels</span>
          </div>
          <Rule className="mt-1.5" />
          <div className="mt-[7px] flex items-center">
            <div className="w-[161px]"><Check label="Use Constant Bitrate:" checked disabled /></div>
            <Spin id="bitrate" value="5600" className="h-5 w-[60px]" />
            <label htmlFor="bitrate" className="ml-1.5">kbps</label>
          </div>
          <div className="mt-1.5 flex items-center">
            <div className="w-[161px]"><Check label="Force Keyframes Every:" checked disabled /></div>
            <Spin id="keyframes" value="3" className="h-[18px] w-[60px]" />
            <label htmlFor="keyframes" className="ml-1.5">seconds</label>
          </div>
        </fieldset>

        <div className="mt-auto flex gap-2 px-px">
          <button className="mr-auto h-[21px] w-[102px] border border-[#adadad] bg-[#e1e1e1]">Restore Defaults</button>
          <button className="h-[21px] w-[73px] border-2 border-[#0078d7] bg-[#e1e1e1]">OK</button>
          <button className="h-[21px] w-[73px] border border-[#adadad] bg-[#e1e1e1]">Cancel</button>
        </div>
      </div>
    </div>
  );
}

export default function App() {
  return (
    <div className="relative flex h-screen flex-col overflow-hidden border-r-2 border-[#c4c4c4] bg-[#f0f0f0] font-['DejaVu_Sans_Mono',monospace] text-[10px] text-black">
      <MenuBar />
      <Toolbars />
      <main className="flex min-h-0 flex-1">
        <SelectionBar />
        <AnalystPanel />
        <section className="ml-1 flex min-w-0 flex-1 flex-col">
          <Viewport />
          <PlaybackBar />
        </section>
      </main>
      <footer className="flex h-5 shrink-0 items-end justify-end border-t border-[#dcdcdc] pr-0.5 pb-0.5">
        <svg viewBox="0 0 8 8" className="size-2 fill-[#b4b4b4]">
          <path d="M6 0h2v2H6zM3 3h2v2H3zM6 3h2v2H6zM0 6h2v2H0zM3 6h2v2H3zM6 6h2v2H6z" />
        </svg>
      </footer>
      <ExportDialog />
    </div>
  );
}
